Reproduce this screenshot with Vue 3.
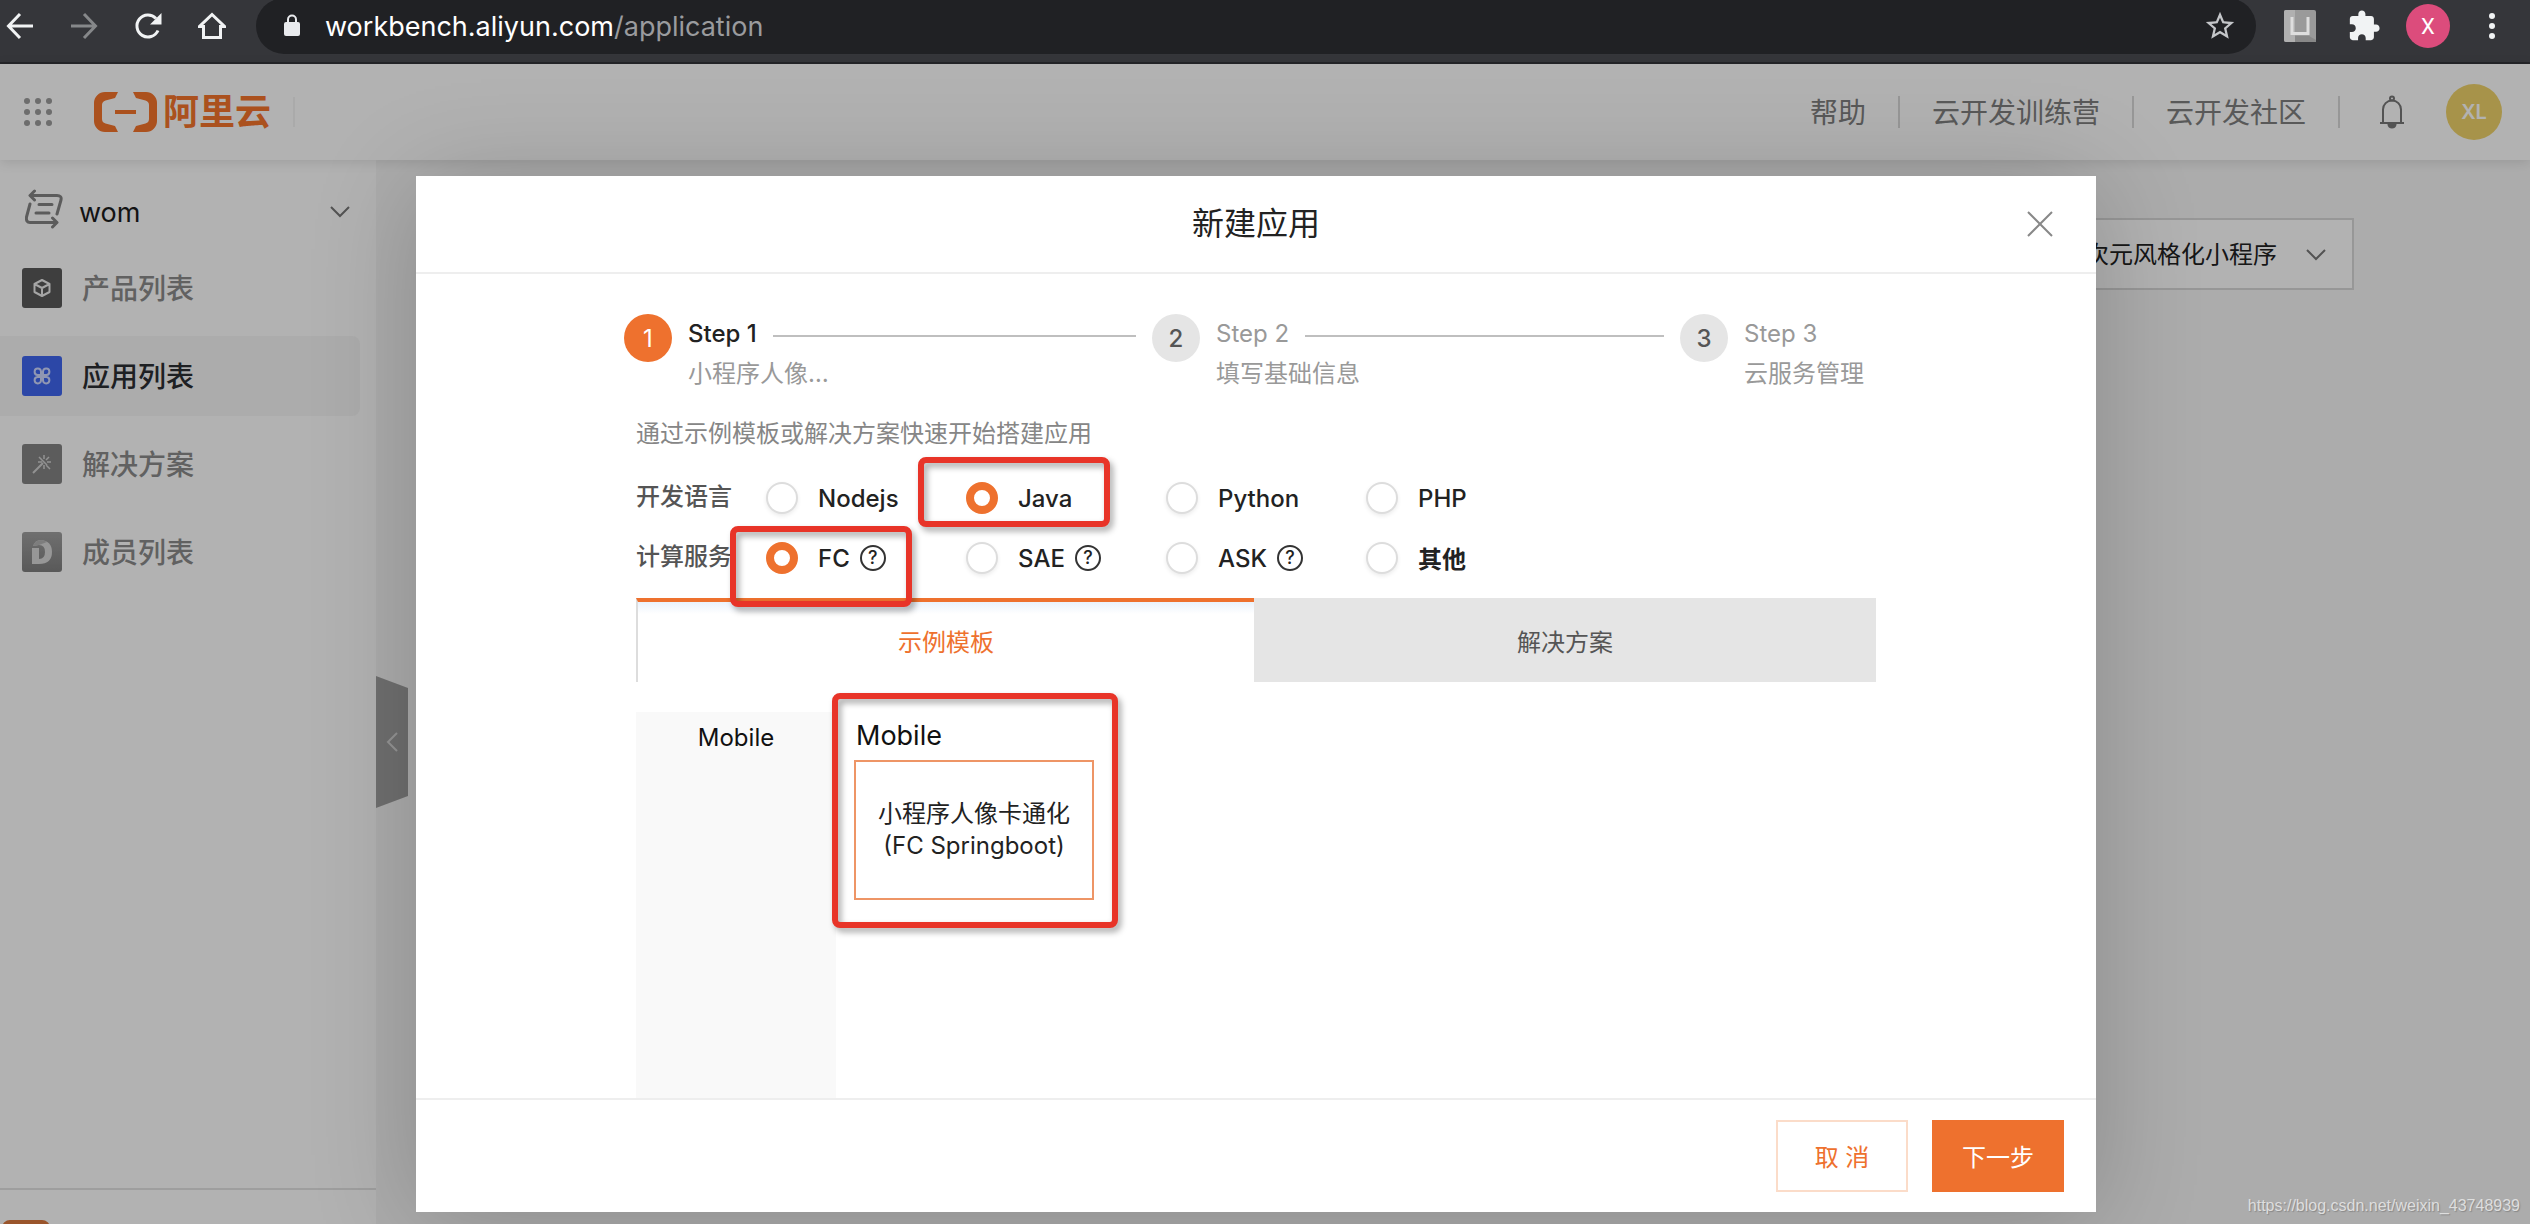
<script setup>
import { ref } from 'vue'

const navItems = [
  { id: 'product', label: '产品列表' },
  { id: 'app', label: '应用列表', active: true },
  { id: 'solution', label: '解决方案' },
  { id: 'member', label: '成员列表' },
]
const steps = [
  { title: 'Step 1', desc: '小程序人像…', active: true },
  { title: 'Step 2', desc: '填写基础信息' },
  { title: 'Step 3', desc: '云服务管理' },
]
const languages = ['Nodejs', 'Java', 'Python', 'PHP']
const services = [
  { name: 'FC', help: true },
  { name: 'SAE', help: true },
  { name: 'ASK', help: true },
  { name: '其他', cjk: true },
]
const language = ref('Java')
const service = ref('FC')
</script>

<template>
  <div class="browser">
    <header class="toolbar">
      <button class="tool" aria-label="Back">
        <svg width="28" height="28" viewBox="0 0 28 28" fill="none" stroke="#f1f3f4" stroke-width="3"><path d="M27 14H3M14 2L2.500 14L14 26" /></svg>
      </button>
      <button class="tool" aria-label="Forward">
        <svg width="28" height="28" viewBox="0 0 28 28" fill="none" stroke="#86888a" stroke-width="3"><path d="M1 14H25M14 2L25.500 14L14 26" /></svg>
      </button>
      <button class="tool" aria-label="Reload">
        <svg width="28" height="28" viewBox="0 0 28 28"><path d="M24 18.500A11 11 0 1 1 22 6.500" fill="none" stroke="#f1f3f4" stroke-width="3" /><path d="M27.500 1V12.500H16Z" fill="#f1f3f4" /></svg>
      </button>
      <button class="tool" aria-label="Home">
        <svg width="28" height="28" viewBox="0 0 28 28" fill="none" stroke="#f1f3f4" stroke-width="3"><path d="M1.500 14.500H5.500V25.500H22.500V14.500H26.500L14 2.500Z" stroke-linejoin="miter" /></svg>
      </button>
      <div class="omnibox">
        <svg width="18" height="24" viewBox="0 0 18 24"><rect x="1" y="8" width="16" height="14" rx="2" fill="#e8eaed" /><path d="M5 9V5.500a4 4 0 0 1 8 0V9" fill="none" stroke="#e8eaed" stroke-width="2" /></svg>
        <span class="url">workbench.aliyun.com<span class="path">/application</span></span>
        <svg class="star" width="34" height="34" viewBox="0 0 24 24" fill="#c4c6c9"><path d="M22 9.240l-7.190-.62L12 2 9.190 8.630 2 9.240l5.460 4.730L5.820 21 12 17.270 18.180 21l-1.630-7.030L22 9.240zM12 15.400l-3.760 2.270 1-4.280-3.320-2.880 4.380-.38L12 6.100l1.710 4.040 4.380.38-3.320 2.880 1 4.280L12 15.400z" /></svg>
      </div>
      <button class="tool" aria-label="Extension">
        <svg width="32" height="32" viewBox="0 0 32 32"><rect width="32" height="32" rx="2" fill="#9a9a9a" /><path d="M0 2a2 2 0 0 1 2-2H11V32H2a2 2 0 0 1-2-2Z" fill="#b0b0b0" /><path d="M11 32V26H25L32 30V32Z" fill="#888" /><path d="M8 7V23.500H24V7" fill="none" stroke="#dedede" stroke-width="3" /></svg>
      </button>
      <button class="tool" aria-label="Extensions">
        <svg width="34" height="34" viewBox="0 0 24 24" fill="#f1f3f4"><path d="M20.500 11H19V7c0-1.100-.9-2-2-2h-4V3.500C13 2.120 11.880 1 10.500 1S8 2.120 8 3.500V5H4c-1.100 0-1.990.9-1.990 2v3.800H3.500c1.490 0 2.700 1.210 2.700 2.700s-1.210 2.700-2.700 2.700H2V20c0 1.100.9 2 2 2h3.800v-1.500c0-1.490 1.210-2.700 2.700-2.700 1.490 0 2.700 1.210 2.700 2.700V22H17c1.100 0 2-.9 2-2v-4h1.500c1.380 0 2.500-1.120 2.500-2.500S21.880 11 20.500 11z" /></svg>
      </button>
      <button class="tool profile">X</button>
      <button class="tool" aria-label="Menu">
        <svg width="8" height="28" viewBox="0 0 8 28" fill="#f1f3f4"><circle cx="4" cy="4" r="3" /><circle cx="4" cy="14" r="3" /><circle cx="4" cy="24" r="3" /></svg>
      </button>
    </header>

    <div class="site">
      <header class="topbar">
        <svg class="apps" width="28" height="28" viewBox="0 0 28 28" fill="#9c9c9c">
          <template v-for="r in 3" :key="r"><circle v-for="c in 3" :key="c" :cx="c * 11 - 8" :cy="r * 11 - 8" r="3" /></template>
        </svg>
        <a class="brand" href="#">
          <svg width="63" height="40" viewBox="0 0 63 40" fill="#f5742b"><path d="M24 0H11A11 11 0 0 0 0 11V29A11 11 0 0 0 11 40H24L21 34L11.500 31.500Q8 30.500 8 27V13Q8 9.500 11.500 8.500L21 6Z" /><path d="M39 0H52A11 11 0 0 1 63 11V29A11 11 0 0 1 52 40H39L42 34L51.500 31.500Q55 30.500 55 27V13Q55 9.500 51.500 8.500L42 6Z" /><rect x="21" y="18" width="21" height="4" /></svg>
          <span>阿里云</span>
        </a>
        <i class="brand-rule"></i>
        <nav class="links">
          <a href="#">帮助</a><i></i>
          <a href="#">云开发训练营</a><i></i>
          <a href="#">云开发社区</a><i></i>
        </nav>
        <button class="bell" aria-label="Notifications">
          <svg width="26" height="34" viewBox="0 0 26 34" fill="none" stroke="#777" stroke-width="2"><path d="M4 28V14.500a9 9 0 0 1 18 0V28M1 28H25" /><circle cx="13" cy="3.500" r="2" /><path d="M9.500 29.500a3.500 3 0 0 0 7 0Z" fill="#777" /></svg>
        </button>
        <span class="avatar">XL</span>
      </header>

      <div class="workspace">
        <aside class="sidebar">
          <button class="team">
            <svg width="38" height="40" viewBox="0 0 38 40" fill="none" stroke="#858585" stroke-width="3" stroke-linecap="round" stroke-linejoin="round"><path d="M9.500 2L5 6.500L9.500 11M5.500 6.500H32Q37 6.500 36 11L32 25M5 15L1.500 28Q.8 33.500 5 33.500H31M27.500 29L32 33.500L27.500 38" /><path d="M14 15.500H27M11 24H24" /></svg>
            <span>wom</span>
            <svg class="chev" width="20" height="12" viewBox="0 0 20 12" fill="none" stroke="#777" stroke-width="2"><path d="M1 1L10 10L19 1" /></svg>
          </button>
          <nav>
            <a v-for="item in navItems" :key="item.id" href="#" class="nav-item" :class="{ active: item.active }">
              <span class="nav-icon" :class="item.id">
                <svg v-if="item.id === 'product'" width="20" height="20" viewBox="0 0 20 20" fill="none" stroke="#eee" stroke-width="2" stroke-linejoin="round"><path d="M10 2L17.500 6V14L10 18L2.500 14V6ZM2.500 6L10 10L17.500 6M10 10V18" /></svg>
                <svg v-else-if="item.id === 'app'" width="20" height="20" viewBox="0 0 20 20" fill="none" stroke="#cfd8ff" stroke-width="2"><path d="M9 9H5.500A3.200 3.200 0 1 1 9 5.500ZM11 9V5.500A3.200 3.200 0 1 1 14.500 9ZM9 11V14.500A3.200 3.200 0 1 1 5.500 11ZM11 11H14.500A3.200 3.200 0 1 1 11 14.500Z" /></svg>
                <svg v-else-if="item.id === 'solution'" width="22" height="22" viewBox="0 0 22 22" fill="none" stroke="#d2d2d2"><path d="M2 20L12 10" stroke-width="2" /><path d="M13 2V6M13 12V16M7 9H11M16 9H20M8 4L11 7M18 4L15 7M15 12L19 16M10 6L16 12" stroke-width="1.500" /></svg>
                <svg v-else width="22" height="26" viewBox="0 0 22 26"><path d="M1 9H8V20Q14 20 14 13Q14 6 8 6L2 7Q4 1 10 1Q21 2 21 13Q21 25 8 25H1Z" fill="#d8d8d8" /><path d="M2 7Q4 1 10 1Q13 1 16 3L8 6Z" fill="#b4b4b4" /></svg>
              </span>
              <span class="nav-label">{{ item.label }}</span>
            </a>
          </nav>
          <div class="side-foot"><i></i></div>
        </aside>
        <main class="content">
          <button class="collapse" aria-label="Collapse">
            <svg width="12" height="20" viewBox="0 0 12 20" fill="none" stroke="#d4d4d4" stroke-width="2"><path d="M11 1L2 10L11 19" /></svg>
          </button>
          <div class="picker">
            <select aria-label="应用"><option>次元风格化小程序</option></select>
            <svg width="20" height="12" viewBox="0 0 20 12" fill="none" stroke="#777" stroke-width="2"><path d="M1 1L10 10L19 1" /></svg>
          </div>
        </main>
      </div>

      <div class="mask">
        <section class="modal" role="dialog" aria-labelledby="dialog-title">
          <header class="modal-head">
            <h1 id="dialog-title">新建应用</h1>
            <button class="close" aria-label="Close">
              <svg width="26" height="26" viewBox="0 0 26 26" stroke="#888" stroke-width="2"><path d="M1 1L25 25M25 1L1 25" /></svg>
            </button>
          </header>

          <div class="modal-body">
            <div class="inner">
              <ol class="steps">
                <li v-for="(s, i) in steps" :key="s.title" :class="{ active: s.active }">
                  <span class="dot">{{ i + 1 }}</span>
                  <div class="step-text">
                    <div class="step-title"><span>{{ s.title }}</span><i v-if="i < 2"></i></div>
                    <div class="step-desc">{{ s.desc }}</div>
                  </div>
                </li>
              </ol>
              <p class="intro">通过示例模板或解决方案快速开始搭建应用</p>

              <div class="row" role="radiogroup" aria-label="开发语言">
                <span class="row-name">开发语言</span>
                <div v-for="l in languages" :key="l" class="cell">
                  <label><input v-model="language" type="radio" name="language" :value="l" />{{ l }}</label>
                  <span v-if="l === 'Java'" class="mark mark-java"></span>
                </div>
              </div>
              <div class="row" role="radiogroup" aria-label="计算服务">
                <span class="row-name">计算服务</span>
                <div v-for="s in services" :key="s.name" class="cell">
                  <label><input v-model="service" type="radio" name="service" :value="s.name" /><span :class="{ cjk: s.cjk }">{{ s.name }}</span></label>
                  <span v-if="s.help" class="help">?</span>
                  <span v-if="s.name === 'FC'" class="mark mark-fc"></span>
                </div>
              </div>

              <div class="tabs" role="tablist">
                <button class="tab on" role="tab" aria-selected="true">示例模板</button>
                <button class="tab" role="tab" aria-selected="false">解决方案</button>
              </div>

              <div class="templates">
                <div class="categories"><a href="#">Mobile</a></div>
                <div class="group">
                  <h2>Mobile</h2>
                  <button class="card"><span>小程序人像卡通化</span><span>(FC Springboot)</span></button>
                  <span class="mark mark-group"></span>
                </div>
              </div>
            </div>
          </div>

          <footer class="modal-foot">
            <button class="btn">取 消</button>
            <button class="btn primary">下一步</button>
          </footer>
        </section>
      </div>
      <span class="watermark">https://blog.csdn.net/weixin_43748939</span>
    </div>
  </div>
</template>

<style>
body { margin: 0; }
</style>

<style scoped>
* { box-sizing: border-box; }
.browser {
  height: 100vh;
  display: flex;
  flex-direction: column;
  overflow: hidden;
  font-family: Inter, "Noto Sans CJK SC", sans-serif;
  font-size: 24px;
  color: #222;
}
button { font: inherit; color: inherit; background: none; border: 0; padding: 0; margin: 0; cursor: pointer; }
a { color: inherit; text-decoration: none; }
svg { display: block; flex: none; }

.toolbar {
  flex: none;
  height: 64px;
  padding: 0 18px 10px 0;
  display: flex;
  align-items: center;
  gap: 24px;
  background: #35363a;
  border-bottom: 2px solid #242528;
}
.tool { width: 40px; height: 40px; flex: none; display: flex; align-items: center; justify-content: center; }
.profile { width: 44px; height: 44px; margin: 0 -2px; border-radius: 50%; background: #dc4c7c; color: #fff; font: 22px Roboto, sans-serif; }
.omnibox {
  flex: 1;
  height: 56px;
  padding: 0 19px 0 27px;
  border-radius: 28px;
  background: #202124;
  display: flex;
  align-items: center;
}
.url { margin-left: 24px; flex: 1; font-size: 27px; color: #fff; }
.path { color: #9a9b9e; }

.site { position: relative; flex: 1; min-height: 0; display: flex; flex-direction: column; background: #f7f7f7; }
.topbar {
  position: relative;
  flex: none;
  height: 96px;
  padding: 0 28px 0 24px;
  display: flex;
  align-items: center;
  background: #fff;
  box-shadow: 0 2px 12px rgba(0, 0, 0, .12);
  font-size: 28px;
  color: #808080;
}
.brand { margin-left: 42px; display: flex; align-items: center; gap: 6px; color: #f5742b; font-size: 36px; font-weight: 700; line-height: 40px; }
.brand-rule { margin-left: 22px; width: 2px; height: 30px; background: #f4f4f4; }
.links { margin-left: auto; display: flex; align-items: center; gap: 32px; }
.links a { padding-bottom: 2px; }
.links i { width: 2px; height: 32px; background: #d9d9d9; }
.bell { margin-left: 39px; }
.avatar { margin-left: 41px; width: 56px; height: 56px; border-radius: 50%; background: #f0d36a; color: #fff; font-size: 20px; font-weight: 600; display: flex; align-items: center; justify-content: center; }

.workspace { flex: 1; min-height: 0; display: flex; }
.sidebar { width: 376px; flex: none; background: #fff; display: flex; flex-direction: column; }
.team { height: 88px; padding: 0 26px 0 25px; display: flex; align-items: center; font-size: 27px; color: #1c1c1c; }
.team span { margin-left: 16px; padding-top: 16px; }
.team svg { margin-top: 10px; }
.team .chev { margin-left: auto; margin-top: 16px; }
.sidebar nav { display: flex; flex-direction: column; gap: 8px; }
.nav-item { height: 80px; width: 360px; padding-left: 22px; display: flex; align-items: center; gap: 20px; border-radius: 0 8px 8px 0; font-size: 28px; color: #8c8c8c; font-weight: 500; }
.nav-label { padding-bottom: 2px; }
.nav-item.active { background: #f7f7f7; color: #2c2f33; }
.nav-icon { width: 40px; height: 40px; border-radius: 3px; display: flex; align-items: center; justify-content: center; background: #858585; }
.nav-icon.product { background: #595959; }
.nav-icon.app { background: #3f66f0; }
.nav-icon.member { background: linear-gradient(#a0a0a0, #808080); }
.side-foot { margin-top: auto; height: 36px; padding: 30px 0 0 2px; border-top: 2px solid #e2e2e2; overflow: hidden; }
.side-foot i { display: block; width: 48px; height: 48px; border-radius: 8px; background: #dd7a3e; }
.content { position: relative; flex: 1; display: flex; align-items: flex-start; padding: 58px 176px 0 0; }
.collapse { margin-top: 458px; width: 32px; height: 132px; display: flex; align-items: center; justify-content: center; background: #a0a0a0; clip-path: polygon(0 0, 100% 12px, 100% 120px, 0 100%); }
.picker { position: relative; margin-left: auto; width: 320px; display: flex; align-items: center; }
.picker select { appearance: none; width: 100%; height: 72px; padding: 0 0 0 49px; border: 2px solid #d8d8d8; border-radius: 0; background: #fff; font: inherit; color: #222; }
.picker svg { position: absolute; right: 28px; top: 31px; pointer-events: none; }

.mask { position: absolute; inset: 0; padding: 112px 18px 12px 0; background: rgba(0, 0, 0, .3); display: flex; justify-content: center; }
.modal { width: 1680px; max-width: 90%; background: #fff; display: flex; flex-direction: column; box-shadow: 0 8px 100px rgba(0, 0, 0, .2); }
.modal-head { position: relative; flex: none; height: 98px; border-bottom: 2px solid #eee; display: flex; align-items: center; justify-content: center; }
h1 { margin: 0; font-size: 32px; font-weight: 400; line-height: 48px; }
.close { position: absolute; right: 43px; top: 35px; }
.modal-body { flex: 1; min-height: 0; overflow: hidden; display: flex; justify-content: center; }
.inner { width: 1240px; display: flex; flex-direction: column; }

.steps { list-style: none; margin: 40px 0 0 -12px; padding: 0; display: grid; grid-template-columns: 1fr 1fr 196px; height: 80px; }
.steps li { display: flex; gap: 16px; color: #999; }
.dot { width: 48px; height: 48px; flex: none; border-radius: 50%; background: #e5e5e5; color: #555; font-weight: 500; display: flex; align-items: center; justify-content: center; }
.active .dot { background: #ee712e; color: #fff; font-weight: 400; }
.step-text { flex: 1; line-height: 40px; }
.step-title { display: flex; align-items: center; }
.active .step-title { color: #222; font-weight: 500; }
.step-title i { flex: 1; height: 2px; margin: 4px 16px 0; background: #bfbfbf; }
.step-desc { white-space: nowrap; }
.intro { margin: 22px 0 16px; line-height: 36px; color: #868686; }

.row { height: 60px; flex: none; display: flex; align-items: center; }
.row-name { width: 130px; color: #555; font-weight: 500; line-height: 32px; padding-bottom: 2px; }
.cell { position: relative; width: 200px; height: 60px; display: flex; align-items: center; gap: 10px; font-weight: 500; }
.cell label { display: flex; align-items: center; gap: 20px; }
.cell .cjk { font-weight: 700; padding-bottom: 2px; }
.cell input { appearance: none; width: 32px; height: 32px; margin: 0; border: 2px solid #ddd; border-radius: 50%; background: #fff; box-shadow: 0 2px 4px rgba(0, 0, 0, .08); }
.cell input:checked { border: 8px solid #ee712e; box-shadow: none; }
.help { width: 26px; height: 26px; border: 2px solid #333; border-radius: 50%; font-size: 18px; line-height: 22px; text-align: center; }
.mark { position: absolute; border: 6px solid #e83428; border-radius: 8px; filter: drop-shadow(3px 4px 3px rgba(0, 0, 0, .35)); pointer-events: none; z-index: 2; }
.mark-java { left: -48px; top: -11px; width: 192px; height: 70px; }
.mark-fc { left: -36px; top: -2px; width: 182px; height: 81px; }
.mark-group { left: -22px; top: -19px; width: 286px; height: 235px; }

.tabs { flex: none; margin-top: 10px; height: 84px; display: grid; grid-template-columns: 618fr 622fr; }
.tab { background: #e5e5e5; color: #555; padding-top: 1px; }
.tab.on { background: linear-gradient(#eaf2fc, #fff 12px); color: #ee712e; border-left: 2px solid #ddd; border-top: 4px solid #ee712e; padding: 0 0 3px; }
.templates { flex: 1; margin-top: 30px; display: flex; gap: 18px; }
.categories { width: 200px; background: #f9f9f9; text-align: center; line-height: 52px; color: #111; }
.group { position: relative; }
h2 { margin: 0; padding-left: 2px; font-size: 27px; font-weight: 400; line-height: 48px; color: #111; }
.card { width: 240px; height: 140px; border: 2px solid #ee9566; display: flex; flex-direction: column; align-items: center; justify-content: center; line-height: 32px; }

.modal-foot { flex: none; height: 114px; padding: 0 32px; border-top: 2px solid #eee; display: flex; align-items: center; justify-content: flex-end; gap: 24px; }
.btn { width: 132px; height: 72px; border: 2px solid #fbdcc9; color: #ee712e; padding-bottom: 2px; }
.btn.primary { background: #ee712e; border-color: #ee712e; color: #fff; }
.watermark { position: absolute; right: 10px; bottom: 9px; font: 16px "Liberation Sans", sans-serif; color: #dedede; text-shadow: 1px 1px 1px #888; }
</style>
